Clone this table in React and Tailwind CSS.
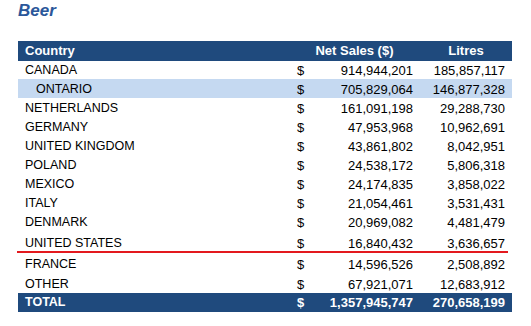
const rows = [
  { name: 'CANADA', sales: '914,944,201', litres: '185,857,117', h: 'h-[18px]' },
  { name: 'ONTARIO', sales: '705,829,064', litres: '146,877,328', h: 'h-[19px]', sub: true },
  { name: 'NETHERLANDS', sales: '161,091,198', litres: '29,288,730', h: 'h-[19px]' },
  { name: 'GERMANY', sales: '47,953,968', litres: '10,962,691', h: 'h-[19px]' },
  { name: 'UNITED KINGDOM', sales: '43,861,802', litres: '8,042,951', h: 'h-[19px]' },
  { name: 'POLAND', sales: '24,538,172', litres: '5,806,318', h: 'h-[19px]' },
  { name: 'MEXICO', sales: '24,174,835', litres: '3,858,022', h: 'h-[19px]' },
  { name: 'ITALY', sales: '21,054,461', litres: '3,531,431', h: 'h-[19px]' },
  { name: 'DENMARK', sales: '20,969,082', litres: '4,481,479', h: 'h-[19px]' },
  { name: 'UNITED STATES', sales: '16,840,432', litres: '3,636,657', h: 'h-[21px]' },
  { name: 'FRANCE', sales: '14,596,526', litres: '2,508,892', h: 'h-[21px]' },
  { name: 'OTHER', sales: '67,921,071', litres: '12,683,912', h: 'h-[20px]' },
]

export default function App() {
  return (
    <div className="relative w-[531px] h-[326px] bg-white font-['Liberation_Sans',Arial,sans-serif] text-black">
      {/* Title */}
      <div className="pl-[18px] h-[41px]">
        <h1 className="text-[17px] leading-[22px] font-bold italic text-[#2B579A]">Beer</h1>
      </div>

      {/* Table */}
      <div className="ml-[18px] w-[494px]">
        <div className="flex items-center h-[20px] bg-[#1F4A7D] text-white font-bold text-[13px]">
          <div className="w-[271px] pl-[7px]">Country</div>
          <div className="w-[131px] text-center">Net Sales ($)</div>
          <div className="w-[92px] text-center">Litres</div>
        </div>

        {rows.map((r) => (
          <div key={r.name} className={`flex items-end pb-[1px] ${r.h} ${r.sub ? 'bg-[#C5D9F1]' : ''} text-[13px] leading-[15px]`}>
            <div className={`w-[271px] text-[12.5px] ${r.sub ? 'pl-[18px]' : 'pl-[7px]'}`}>{r.name}</div>
            <div className="w-[25px] pl-[8px]">$</div>
            <div className="w-[106px] text-right pr-[7px]">{r.sales}</div>
            <div className="w-[92px] text-right pr-[7px]">{r.litres}</div>
          </div>
        ))}

        <div className="flex items-center h-[19px] bg-[#1F4A7D] text-white font-bold text-[13px]">
          <div className="w-[271px] pl-[7px] text-[12.5px]">TOTAL</div>
          <div className="w-[25px] pl-[8px]">$</div>
          <div className="w-[106px] text-right pr-[7px]">1,357,945,747</div>
          <div className="w-[92px] text-right pr-[7px]">270,658,199</div>
        </div>
      </div>

      {/* Red annotation line */}
      <div className="absolute left-[17px] top-[251px] w-[491px] h-[2px] bg-[#E3191E]" />
    </div>
  )
}
